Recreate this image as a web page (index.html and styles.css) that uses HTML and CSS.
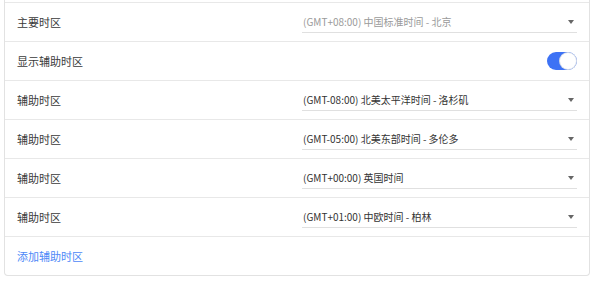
FILE: index.html
```html
<!DOCTYPE html>
<html lang="zh-CN">
<head>
    <meta charset="UTF-8">
    <title>时区设置</title>
    <link rel="stylesheet" href="styles.css">
</head>
<body>
    <div class="panel">
        <div class="row">
            <div class="label">主要时区</div>
            <div class="select disabled"><span>(GMT+08:00) 中国标准时间 - 北京</span><i class="caret"></i></div>
        </div>
        <div class="row">
            <div class="label">显示辅助时区</div>
            <div class="ctrl"><span class="switch on"><b></b></span></div>
        </div>
        <div class="row">
            <div class="label">辅助时区</div>
            <div class="select"><span>(GMT-08:00) 北美太平洋时间 - 洛杉矶</span><i class="caret"></i></div>
        </div>
        <div class="row">
            <div class="label">辅助时区</div>
            <div class="select"><span>(GMT-05:00) 北美东部时间 - 多伦多</span><i class="caret"></i></div>
        </div>
        <div class="row">
            <div class="label">辅助时区</div>
            <div class="select"><span>(GMT+00:00) 英国时间</span><i class="caret"></i></div>
        </div>
        <div class="row">
            <div class="label">辅助时区</div>
            <div class="select"><span>(GMT+01:00) 中欧时间 - 柏林</span><i class="caret"></i></div>
        </div>
        <div class="row">
            <a class="add" href="#">添加辅助时区</a>
        </div>
    </div>
</body>
</html>
```

FILE: styles.css
```css
*{margin: 0;padding: 0;box-sizing: border-box;}
body{background: #fff;font-family: "Noto Sans CJK SC", "Liberation Sans", sans-serif;font-size: 11px;color: #333;}
.panel{margin: 0 10px 0 4px;padding-top: 2px;border: 1px solid #e2e2e2;border-top: 0;border-radius: 0 0 4px 4px;}
.row{display: flex;align-items: center;height: 39px;padding: 0 12px 0 12px;border-top: 1px solid #e8e8e8;}
.label{flex: 1;font-size: 11px;color: #3a3a3a;}
.select{width: 275px;height: 21px;display: flex;align-items: center;justify-content: space-between;padding: 0 3px 0 1px;border-bottom: 1px solid #e0e0e0;font-size: 10px;color: #333;}
.select.disabled{color: #9a9a9a;}
.caret{width: 0;height: 0;border-left: 3.5px solid transparent;border-right: 3.5px solid transparent;border-top: 4px solid #666;}
.ctrl{width: 275px;display: flex;justify-content: flex-end;}
.switch{width: 30px;height: 18px;border-radius: 9px;background: #3d72f5;display: flex;align-items: center;justify-content: flex-end;padding: 1px;}
.switch b{width: 16px;height: 16px;border-radius: 50%;background: #fff;box-shadow: 0 0 0 1px #d5dbe8;}
.add{color: #4d88f7;text-decoration: none;font-size: 11px;}
```
